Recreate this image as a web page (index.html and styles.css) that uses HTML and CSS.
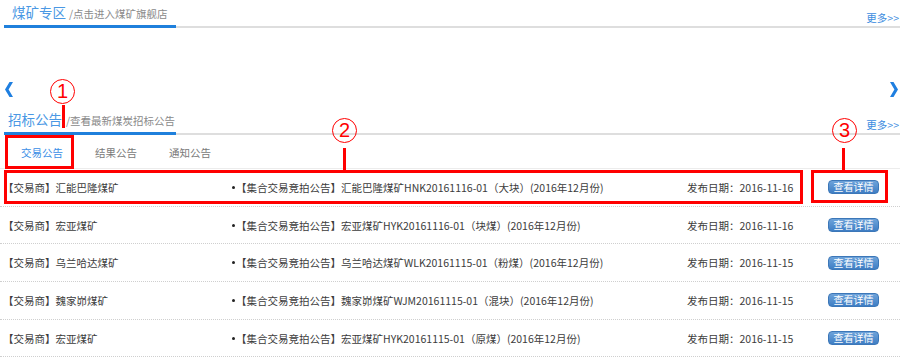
FILE: index.html
```html
<!DOCTYPE html>
<html lang="zh-CN">
<head>
<meta charset="utf-8">
<title>煤矿专区</title>
<link rel="stylesheet" href="styles.css">
</head>
<body>
<div class="page">
  <div class="head">
    <div class="head-title"><span class="title">煤矿专区</span><span class="sub">/点击进入煤矿旗舰店</span></div>
    <a class="more" href="#">更多&gt;&gt;</a>
  </div>

  <div class="slider">
    <svg class="arrow" width="8" height="15" viewBox="0 0 8 15"><path d="M8 0 L4.5 0 L0 7.5 L4.5 15 L8 15 L3.6 7.5 Z" fill="#1f7fe0"/></svg>
    <svg class="arrow" width="8" height="15" viewBox="0 0 8 15"><path d="M0 0 L3.5 0 L8 7.5 L3.5 15 L0 15 L4.4 7.5 Z" fill="#1f7fe0"/></svg>
  </div>

  <div class="head head-bid">
    <div class="head-title"><span class="title">招标公告</span><span class="sub">/查看最新煤炭招标公告</span></div>
    <a class="more" href="#">更多&gt;&gt;</a>
  </div>

  <div class="tabs">
    <span class="tab active">交易公告</span>
    <span class="tab">结果公告</span>
    <span class="tab">通知公告</span>
  </div>

  <ul class="list">
    <li class="row">
      <span class="c1">【交易商】汇能巴隆煤矿</span>
      <span class="c2"><i class="dot"></i>【集合交易竞拍公告】汇能巴隆煤矿HNK20161116-01（大块）(2016年12月份)</span>
      <span class="c3">发布日期：2016-11-16</span>
      <a class="btn" href="#">查看详情</a>
    </li>
    <li class="row">
      <span class="c1">【交易商】宏亚煤矿</span>
      <span class="c2"><i class="dot"></i>【集合交易竞拍公告】宏亚煤矿HYK20161116-01（块煤）(2016年12月份)</span>
      <span class="c3">发布日期：2016-11-16</span>
      <a class="btn" href="#">查看详情</a>
    </li>
    <li class="row">
      <span class="c1">【交易商】乌兰哈达煤矿</span>
      <span class="c2"><i class="dot"></i>【集合交易竞拍公告】乌兰哈达煤矿WLK20161115-01（粉煤）(2016年12月份)</span>
      <span class="c3">发布日期：2016-11-15</span>
      <a class="btn" href="#">查看详情</a>
    </li>
    <li class="row">
      <span class="c1">【交易商】魏家峁煤矿</span>
      <span class="c2"><i class="dot"></i>【集合交易竞拍公告】魏家峁煤矿WJM20161115-01（混块）(2016年12月份)</span>
      <span class="c3">发布日期：2016-11-15</span>
      <a class="btn" href="#">查看详情</a>
    </li>
    <li class="row">
      <span class="c1">【交易商】宏亚煤矿</span>
      <span class="c2"><i class="dot"></i>【集合交易竞拍公告】宏亚煤矿HYK20161115-01（原煤）(2016年12月份)</span>
      <span class="c3">发布日期：2016-11-15</span>
      <a class="btn" href="#">查看详情</a>
    </li>
  </ul>

  <div class="mark box box1"></div>
  <div class="mark box box2"></div>
  <div class="mark box box3"></div>
  <div class="mark num num1">1</div>
  <div class="mark num num2">2</div>
  <div class="mark num num3">3</div>
  <div class="mark stem stem1"></div>
  <div class="mark stem stem2"></div>
  <div class="mark stem stem3"></div>
</div>
</body>
</html>
```

FILE: styles.css
```css
* { box-sizing: border-box; }
html, body { margin: 0; padding: 0; background: #fff; }
body {
  font-family: "Noto Sans CJK SC", "Noto Sans", sans-serif;
  color: #3c3c3c;
  font-size: 11px;
}
a { text-decoration: none; }

.page {
  position: relative;
  width: 900px;
  height: 362px;
  overflow: hidden;
}

/* section headers */
.head {
  display: flex;
  justify-content: space-between;
  align-items: flex-end;
  margin-left: 4px;
  border-bottom: 2px solid #dedede;
}
.head-title {
  width: 172px;
  padding: 3px 0 2px 8px;
  margin-bottom: -2px;
  border-bottom: 3px solid #1f80dc;
  line-height: 18px;
  white-space: nowrap;
}
.head-bid .head-title { padding-left: 4px; }
.title {
  font-size: 13.5px;
  color: #4a98e4;
}
.sub {
  font-size: 10.5px;
  color: #8a8a8a;
  margin-left: 3px;
}
.head-bid .sub { margin-left: 4px; }
.more {
  font-size: 10.5px;
  line-height: 12px;
  color: #3d8de0;
  margin-bottom: 2px;
  padding-right: 1px;
}

.slider {
  height: 79px;
  display: flex;
  justify-content: space-between;
  align-items: flex-start;
  padding: 54px 2px 0 5px;
}
.arrow { display: block; }

/* tabs */
.tabs {
  display: flex;
  padding: 2px 0 0 5px;
  border-bottom: 1px solid #ececec;
}
.tab {
  width: 74px;
  text-align: center;
  line-height: 31px;
  font-size: 10.5px;
  color: #7a7a7a;
}
.tab.active { color: #3a8ee6; }

/* list */
.list {
  list-style: none;
  margin: 0;
  padding: 0;
}
.row {
  display: flex;
  align-items: center;
  height: 37.7px;
  padding-left: 3px;
  border-bottom: 1px dotted #cfcfcf;
  white-space: nowrap;
  font-size: 10.5px;
}
.c1 { width: 229px; }
.c2 {
  width: 455px;
  display: flex;
  align-items: center;
}
.dot {
  width: 3px;
  height: 3px;
  border-radius: 50%;
  background: #222;
  margin-right: 1px;
}
.c3 { width: 141px; }
.btn {
  width: 51px;
  height: 14px;
  line-height: 12px;
  text-align: center;
  font-size: 10px;
  color: #fff;
  border: 1px solid #3c77b8;
  border-radius: 4px;
  background: linear-gradient(#6ea3da, #3f7ec4);
}

/* red annotations */
.mark { position: absolute; }
.box { border: 3px solid #f00; }
.box1 { left: 5px; top: 135px; width: 69px; height: 34px; }
.box2 { left: 4px; top: 170px; width: 799px; height: 34px; }
.box3 { left: 811px; top: 170px; width: 77px; height: 33px; }

.num {
  width: 25px;
  height: 25px;
  border: 1.6px solid #f00;
  border-radius: 50%;
  color: #f00;
  font-family: "Liberation Sans", sans-serif;
  font-size: 20px;
  line-height: 22px;
  text-align: center;
}
.num1 { left: 50px; top: 79px; }
.num2 { left: 332px; top: 118px; }
.num3 { left: 832px; top: 118px; }

.stem { width: 3px; background: #f00; }
.stem1 { left: 62px; top: 105px; height: 23px; }
.stem2 { left: 343px; top: 148px; height: 22px; }
.stem3 { left: 842px; top: 148px; height: 22px; }
```
